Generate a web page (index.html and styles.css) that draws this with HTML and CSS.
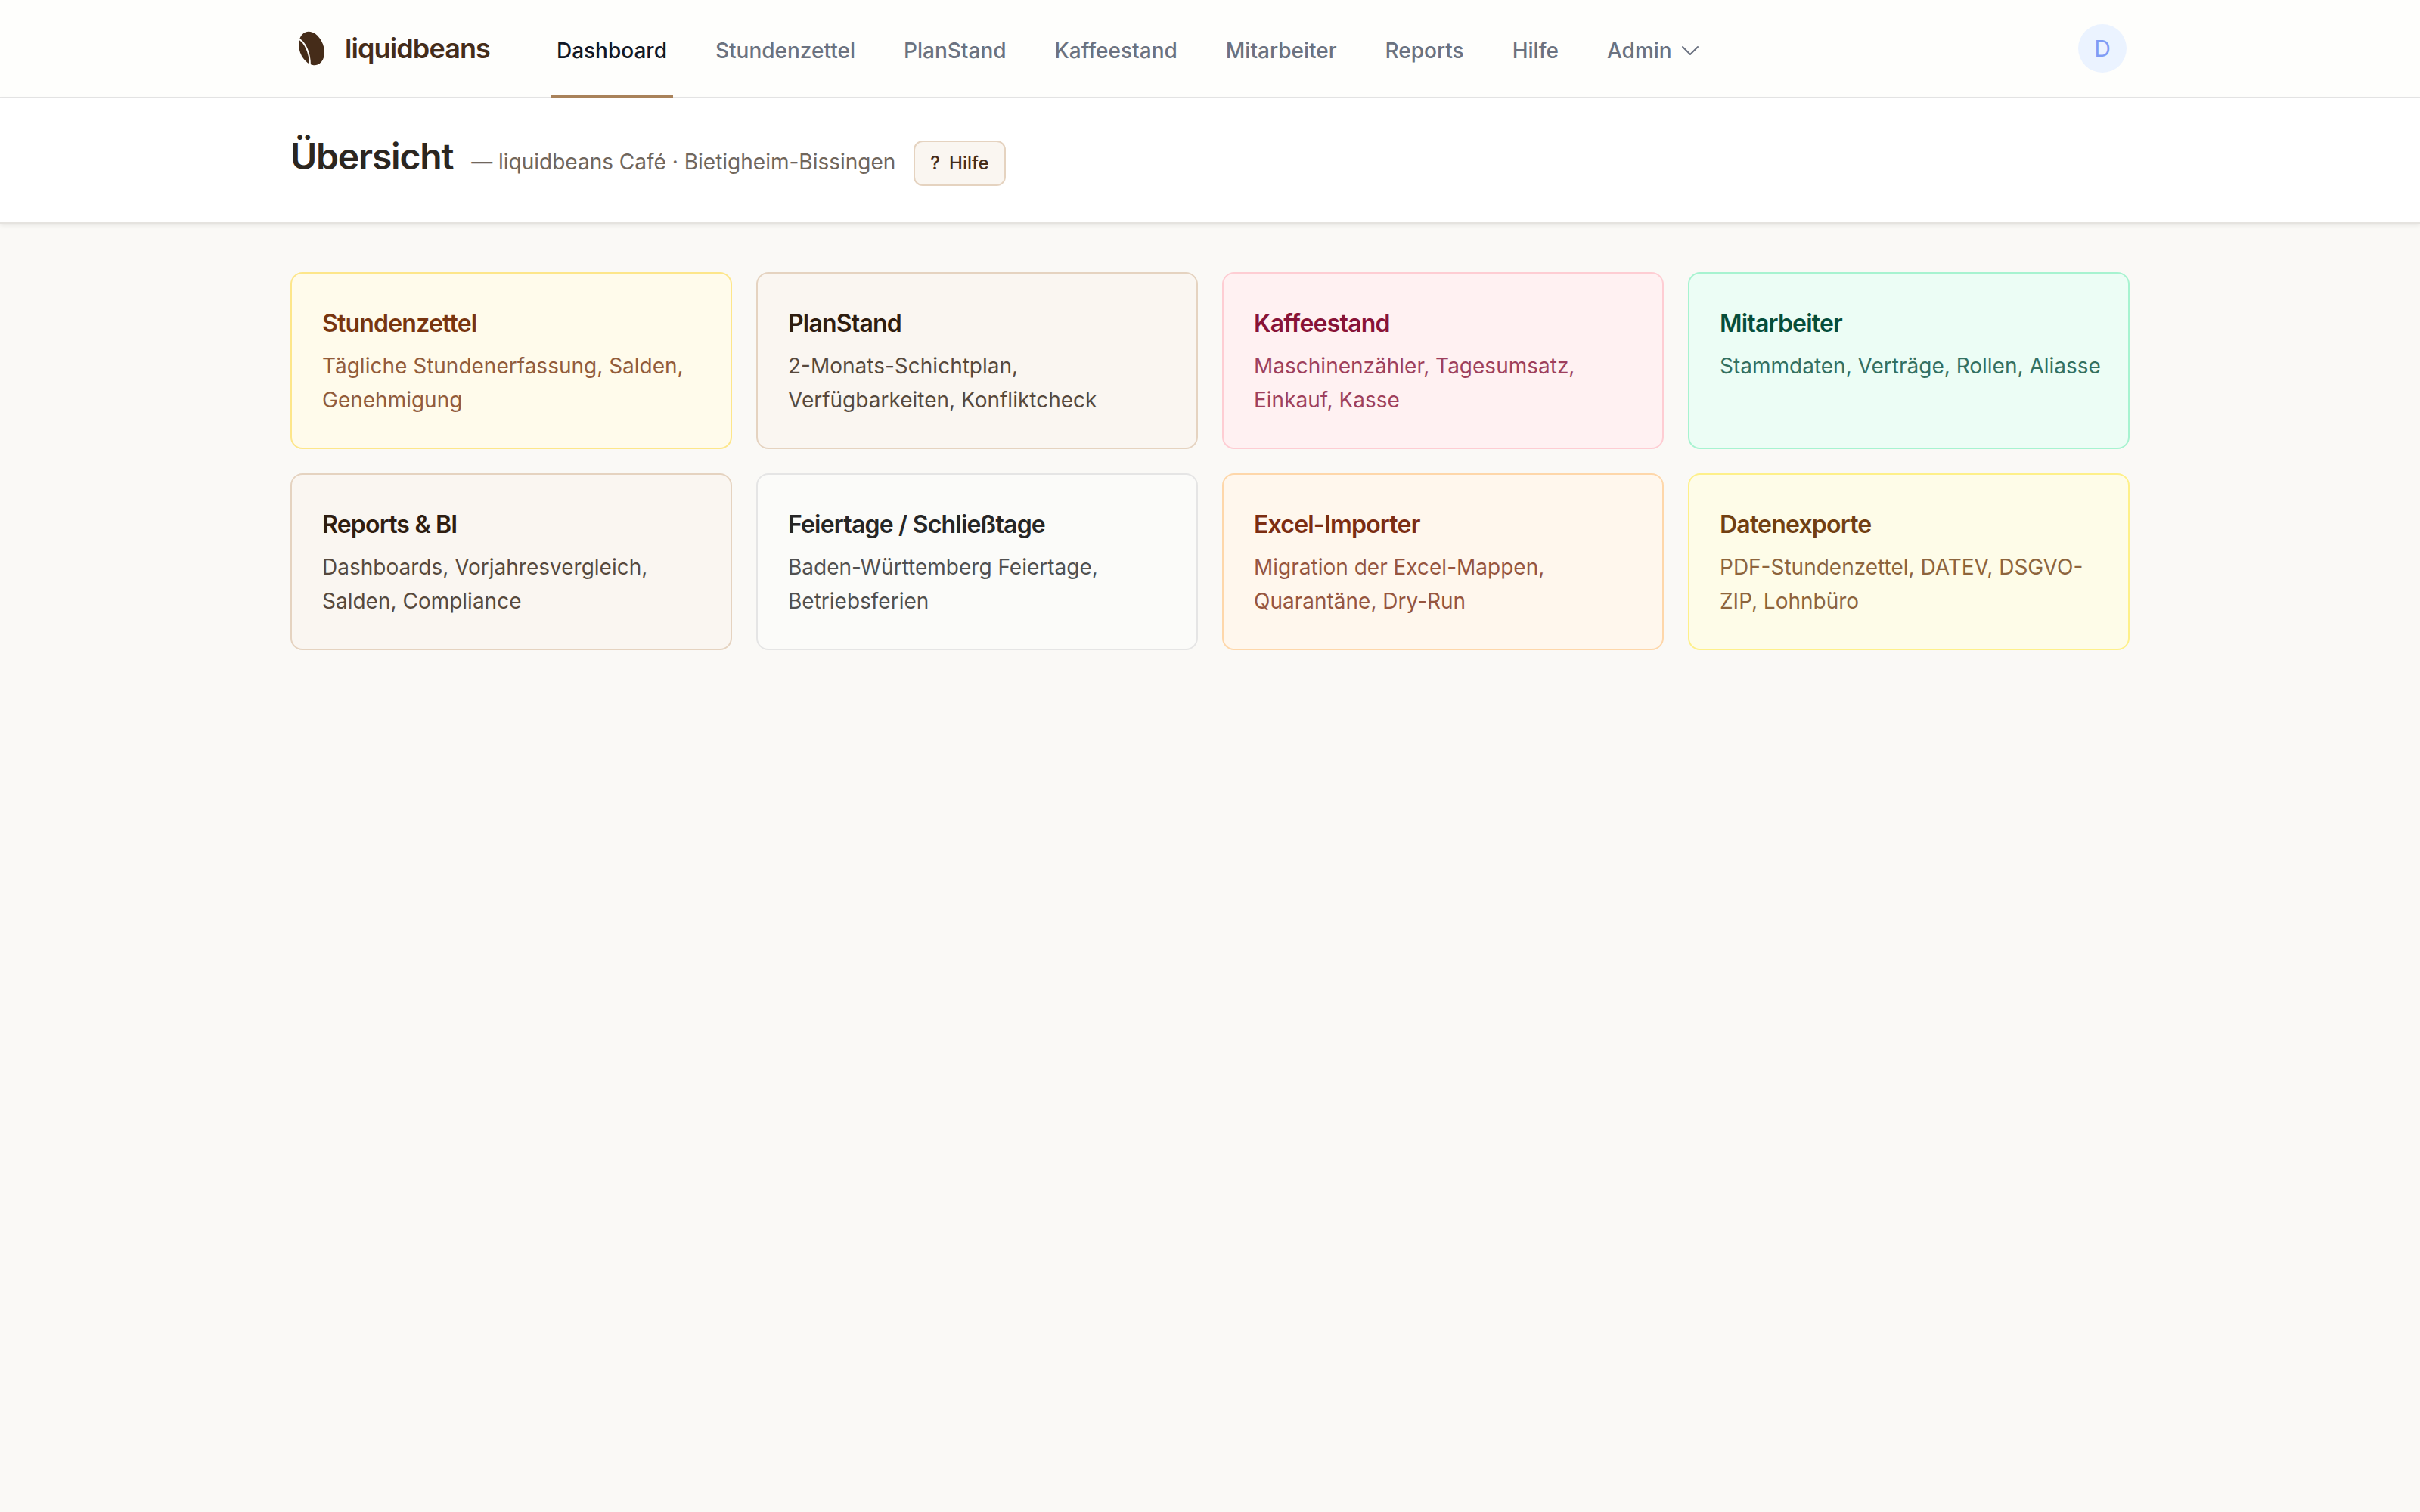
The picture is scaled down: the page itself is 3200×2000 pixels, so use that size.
FILE: index.html
```html
<!DOCTYPE html>
<html lang="de">
<head>
  <meta charset="UTF-8">
  <meta name="viewport" content="width=device-width, initial-scale=1.0">
  <title>liquidbeans - Übersicht</title>
  <link rel="stylesheet" href="styles.css">
</head>
<body>
  <header class="topbar">
    <div class="container topbar-inner">
      <a class="brand" href="#">
        <svg class="brand-icon" viewBox="0 0 56 56" aria-hidden="true">
          <g transform="rotate(-20 28 28)">
            <ellipse cx="28" cy="28" rx="16" ry="23" fill="#452c19"/>
          </g>
          <path d="M10 15C19 19 26 33 26 51" fill="none" stroke="#fefefc" stroke-width="2"/>
        </svg>
        <span>liquidbeans</span>
      </a>
      <nav class="nav">
        <a class="nav-link active" href="#">Dashboard</a>
        <a class="nav-link" href="#">Stundenzettel</a>
        <a class="nav-link" href="#">PlanStand</a>
        <a class="nav-link" href="#">Kaffeestand</a>
        <a class="nav-link" href="#">Mitarbeiter</a>
        <a class="nav-link" href="#">Reports</a>
        <a class="nav-link" href="#">Hilfe</a>
        <button type="button" class="nav-link">
          Admin
          <svg class="chevron" viewBox="0 0 24 24" aria-hidden="true">
            <path d="m19.5 8.25-7.5 7.5-7.5-7.5"/>
          </svg>
        </button>
      </nav>
      <button type="button" class="avatar">D</button>
    </div>
  </header>

  <div class="page-head">
    <div class="container page-head-inner">
      <h1>Übersicht</h1>
      <span class="subtitle">— liquidbeans Café · Bietigheim-Bissingen</span>
      <button type="button" class="help-btn"><span>?</span><span>Hilfe</span></button>
    </div>
  </div>

  <main class="container cards">
    <a class="card amber" href="#">
      <h2>Stundenzettel</h2>
      <p>Tägliche Stundenerfassung, Salden, Genehmigung</p>
    </a>
    <a class="card coffee" href="#">
      <h2>PlanStand</h2>
      <p>2-Monats-Schichtplan, Verfügbarkeiten, Konfliktcheck</p>
    </a>
    <a class="card rose" href="#">
      <h2>Kaffeestand</h2>
      <p>Maschinenzähler, Tagesumsatz, Einkauf, Kasse</p>
    </a>
    <a class="card emerald" href="#">
      <h2>Mitarbeiter</h2>
      <p>Stammdaten, Verträge, Rollen, Aliasse</p>
    </a>
    <a class="card coffee" href="#">
      <h2>Reports &amp; BI</h2>
      <p>Dashboards, Vorjahresvergleich, Salden, Compliance</p>
    </a>
    <a class="card neutral" href="#">
      <h2>Feiertage / Schließtage</h2>
      <p>Baden-Württemberg Feiertage, Betriebsferien</p>
    </a>
    <a class="card orange" href="#">
      <h2>Excel-Importer</h2>
      <p>Migration der Excel-Mappen, Quarantäne, Dry-Run</p>
    </a>
    <a class="card yellow" href="#">
      <h2>Datenexporte</h2>
      <p>PDF-Stundenzettel, DATEV, DSGVO-ZIP, Lohnbüro</p>
    </a>
  </main>
</body>
</html>
```
FILE: styles.css
```css
* {
  box-sizing: border-box;
}
body {
  margin: 0;
  font-family: Inter, "Liberation Sans", sans-serif;
  font-size: 28px;
  background: #faf9f6;
  color: #2c2620;
}
h1, h2, p {
  margin: 0;
}
a {
  color: inherit;
  text-decoration: none;
}
button {
  font: inherit;
  cursor: pointer;
}
.container {
  max-width: 2560px;
  margin: 0 auto;
  padding: 0 64px;
}

/* Navigation */
.topbar {
  background: #fefefc;
  border-bottom: 2px solid #e5e5e5;
}
.topbar-inner {
  display: flex;
  align-items: center;
  height: 128px;
}
.brand {
  display: flex;
  align-items: center;
  gap: 16px;
  margin-right: 80px;
  font-size: 36px;
  font-weight: 600;
  letter-spacing: -0.025em;
  color: #452c19;
}
.brand-icon {
  width: 56px;
  height: 56px;
}
.nav {
  display: flex;
  gap: 48px;
  align-self: stretch;
  margin-bottom: -2px;
}
.nav-link {
  display: flex;
  align-items: center;
  gap: 8px;
  padding: 8px 8px 0;
  border: 0;
  border-bottom: 4px solid transparent;
  background: none;
  font-weight: 500;
  color: #6b7280;
}
.nav-link.active {
  border-bottom-color: #a9825a;
  color: #111827;
}
.chevron {
  width: 32px;
  height: 32px;
  fill: none;
  stroke: currentColor;
  stroke-width: 1.5;
  stroke-linecap: round;
  stroke-linejoin: round;
}
.avatar {
  width: 64px;
  height: 64px;
  margin-left: auto;
  margin-right: 4px;
  padding: 0;
  border: 0;
  border-radius: 50%;
  background: #ebf3ff;
  font-size: 30px;
  color: #7f9cf5;
}

/* Seitenkopf */
.page-head {
  background: #fff;
  border-bottom: 2px solid #e5e3df;
  box-shadow: 0 2px 6px rgba(0, 0, 0, 0.08);
}
.page-head-inner {
  display: flex;
  align-items: baseline;
  gap: 24px;
  padding-top: 48px;
  padding-bottom: 48px;
}
h1 {
  font-size: 48px;
  line-height: 58px;
  font-weight: 600;
  letter-spacing: -0.025em;
  color: #2c2620;
}
.subtitle {
  color: #70665c;
}
.help-btn {
  display: flex;
  gap: 12px;
  padding: 12px 20px;
  border: 2px solid #e5d3c0;
  border-radius: 12px;
  background: #faf6f1;
  font-size: 24px;
  line-height: 32px;
  font-weight: 500;
  color: #452c19;
}

/* Kacheln */
.cards {
  display: grid;
  grid-template-columns: repeat(4, 1fr);
  gap: 32px;
  padding-top: 64px;
  padding-bottom: 64px;
}
.card {
  padding: 40px 32px 40px 40px;
  border: 2px solid;
  border-radius: 16px;
}
.card h2 {
  margin-bottom: 8px;
  font-size: 32px;
  line-height: 52px;
  font-weight: 600;
  letter-spacing: -0.025em;
}
.card p {
  line-height: 45px;
  opacity: 0.8;
}
.amber {
  background: #fffbeb;
  border-color: #fde68a;
  color: #78350f;
}
.coffee {
  background: #faf6f1;
  border-color: #e5d3c0;
  color: #2f1d10;
}
.rose {
  background: #fff1f2;
  border-color: #fecdd3;
  color: #881337;
}
.emerald {
  background: #ecfdf5;
  border-color: #a7f3d0;
  color: #064e3b;
}
.neutral {
  background: #fbfbf9;
  border-color: #e5e5e5;
  color: #262626;
}
.orange {
  background: #fff7ed;
  border-color: #fed7aa;
  color: #7c2d12;
}
.yellow {
  background: #fefce8;
  border-color: #fef08a;
  color: #713f12;
}
@media (max-width: 1600px) {
  .cards {
    grid-template-columns: repeat(2, 1fr);
  }
}
```
